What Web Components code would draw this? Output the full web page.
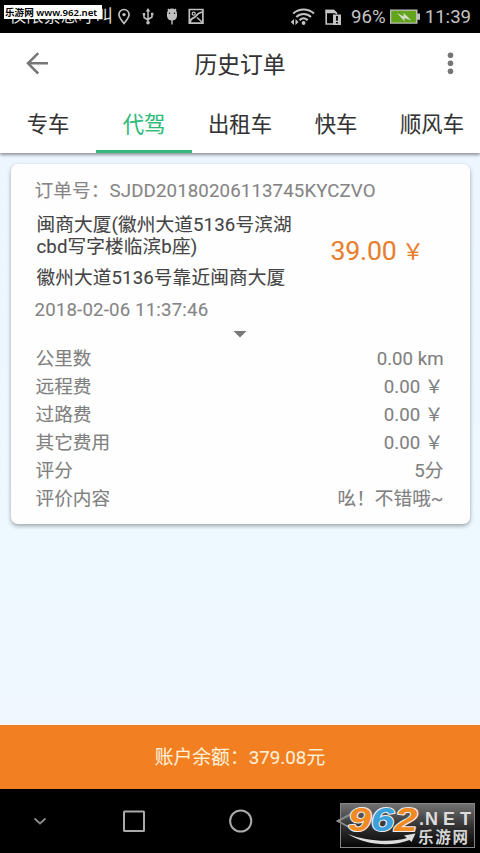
<!DOCTYPE html>
<html lang="zh-CN">
<head>
<meta charset="utf-8">
<title>历史订单</title>
<style>
html,body{margin:0;height:853px;overflow:hidden;background:#000;font-family:Roboto,"Noto Sans CJK SC",sans-serif;-webkit-text-stroke:.1px}
</style>
</head>
<body>
<order-app></order-app>
<script>
const define = (name, html) => customElements.define(name, class extends HTMLElement {
  constructor() {
    super();
    this.attachShadow({ mode: 'open' }).innerHTML = html;
  }
});

define('status-bar', `
<style>
:host{display:block;position:relative;height:33px;background:#000;color:#c4c4c4;-webkit-text-stroke:0}
.row{display:flex;height:33px;align-items:center;box-sizing:border-box;padding-left:9px}
.carrier{font-size:17.3px;line-height:33px;width:103px;color:#ddd;white-space:nowrap}
svg{display:block;flex:none}
.time{font-size:18.67px;line-height:33px;white-space:nowrap;padding-top:2px}
.tag{position:absolute;left:4px;top:5px;width:98px;height:14px;background:#fff;color:#000;font:600 9.6px/15px "Noto Sans","Noto Sans CJK SC",sans-serif;white-space:nowrap;box-sizing:border-box;padding-left:1px}
</style>
<div class="row">
 <span class="carrier">仅限紧急呼叫</span>
 <svg width="96" height="33" viewBox="112 0 96 33" fill="none" stroke="#c0c0c0" stroke-width="1.7">
  <path d="M124 23.500C121 20 118.900 17.500 118.900 14.600a5.100 5.100 0 0 1 10.200 0C129.100 17.500 127 20 124 23.500Z"/><circle cx="124" cy="14.600" r="1.700" fill="#c0c0c0" stroke="none"/>
  <path d="M148 11v11M144 14.500v3l4 2.500M152 14v3l-4 2.500" stroke-width="1.500"/><path d="M148 8l2.300 3.500h-4.600z" fill="#c0c0c0" stroke="none"/><circle cx="148" cy="22.800" r="1.800" fill="#c0c0c0" stroke="none"/><path d="M142.800 13h2.400v2.400h-2.400zM151 12.800h2.400v2.400h-2.400z" fill="#c0c0c0" stroke="none"/>
  <path d="M167 13.500a5 5 0 0 1 10 0v2.500a5 4.500 0 0 1-10 0z" fill="#c0c0c0" stroke="none"/><path d="M168 9l1.500 2M176 9l-1.500 2M172 20v4.500" stroke-width="1.400"/><path d="M169.500 12.500v1.600M174.500 12.500v1.600" stroke="#222" stroke-width="1.200"/>
  <path d="M189.300 9.500h13.600v13.600h-13.600zM190 22.500c1-6 4-3.500 6-6.500s3-3.500 6.500-4" stroke-width="1.700"/><path d="M197 17.500l5.500 5" stroke-width="1.500"/><circle cx="193.700" cy="13.700" r="1.500" stroke-width="1.300"/>
 </svg>
 <svg style="margin-left:82px" width="61" height="33" viewBox="290 0 61 33" fill="none" stroke="#c4c4c4" stroke-width="2">
  <path d="M293.200 13.500c6-5.300 14.800-5.300 20.800 0M296.300 16.900c4.300-4 10.400-4 14.700 0M299.500 20.300c2.500-2.500 5.700-2.500 8.200 0"/><circle cx="303.600" cy="23" r="1.900" fill="#c4c4c4" stroke="none"/>
  <path d="M294 19v6l-3.300-3zM295.500 19v6l3-3z" fill="#c4c4c4" stroke="none"/>
  <path d="M333 24h-6.800V10.500h7.300l3.500 3.300" stroke-width="1.600"/><path d="M325.500 9.700h8.500l3.300 3.500h-11.800z" fill="#c4c4c4" stroke="none"/><path d="M333 14.500h8V25h-8z" fill="#c4c4c4" stroke="none"/><path d="M337 16v4.800M337 22v1.600" stroke="#111"/>
 </svg>
 <span class="time">96%</span>
 <svg style="margin-left:3px" width="31" height="33" viewBox="388 0 31 33"><path d="M389 9.500h27.500v4H419v6.200h-2.500v4H389z" fill="#bdbdb8"/><path d="M390.300 10.800H415v11.700h-24.700z" fill="#62a51d"/><path d="M396 13l6.500 3.500.3-3.500 7.500 7.500-6.800-2.500v3.200z" fill="#d7ddcd"/></svg>
 <span class="time" style="margin-left:5px">11:39</span>
</div>
<div class="tag">乐游网 www.962.net</div>`);

define('title-bar', `
<style>
:host{display:grid;position:relative;z-index:1;grid-template-columns:96px 1fr 96px;height:62px;background:#fff;color:#333;font-size:22.8px;line-height:65px;text-align:center}
svg{display:block}
</style>
<svg width="96" height="62" viewBox="0 0 96 62" fill="none" stroke="#777" stroke-width="2.500"><path d="M48 30.300H28M38.200 20.200L28 30.300l10.200 10.200"/></svg>
<span><slot></slot></span>
<svg width="96" height="62" viewBox="384 0 96 62" fill="#757575"><circle cx="450.500" cy="22.200" r="2.800"/><circle cx="450.500" cy="30.200" r="2.800"/><circle cx="450.500" cy="38.200" r="2.800"/></svg>`);

define('tab-item', `
<style>
:host{display:block;box-sizing:border-box;height:58px;border-bottom:3px solid transparent;text-align:center;font-size:21.33px;line-height:60px;color:#333;white-space:nowrap}
:host([active]){color:#2dba79;border-color:#35b97c}
</style><slot></slot>`);

define('tab-strip', `
<style>
:host{display:grid;grid-template-columns:repeat(5,96px);height:58px;background:#fff;position:relative;box-shadow:0 2px 3px rgba(0,0,0,.4)}
</style><slot></slot>`);

define('fee-row', `
<style>
:host{display:flex;justify-content:space-between;height:28px;line-height:28px;font-size:18.67px;color:#808080;padding:0 26px 0 25px}
</style><slot name="label"></slot><slot></slot>`);

define('order-card', `
<style>
:host{display:block;box-sizing:border-box;height:360px;margin:11px 10.5px 0;background:#fefefe;border-radius:7px;box-shadow:0 2px 4px rgba(0,0,0,.34);font-size:18.67px;color:#444}
.no{height:28px;line-height:28px;padding:13px 0 0 24px;color:#858585;white-space:nowrap;letter-spacing:.12px}
.main{display:grid;box-sizing:border-box;grid-template-columns:320px 1fr;height:93px;padding-top:9px}
.addr{padding-left:26px;line-height:22px;letter-spacing:.1px}
.addr div{white-space:nowrap}
.to{margin-top:9px}
.price{color:#e87f2e;font-size:26.67px;line-height:30px;padding-top:22px;white-space:nowrap;letter-spacing:-.2px}
.price small{font-size:22px;margin-left:-1px;position:relative;top:-1px}
.date{height:24px;line-height:24px;padding-left:24px;color:#858585;letter-spacing:.16px}
.caret{display:block;margin:9px auto 7px}
</style>
<div class="no"><slot name="number"></slot></div>
<div class="main"><div class="addr"><div><slot name="from1"></slot></div><div><slot name="from2"></slot></div><div class="to"><slot name="to"></slot></div></div>
<div class="price"><slot name="price"></slot> <small>￥</small></div></div>
<div class="date"><slot name="date"></slot></div>
<svg class="caret" width="14" height="7" viewBox="0 0 14 7"><path d="M.5 0h13L7 6.500z" fill="#777"/></svg>
<slot></slot>`);

define('balance-bar', `
<style>
:host{display:block;height:64px;line-height:67px;text-align:center;background:#f27f22;color:#fff0d8;font-size:18.8px}
</style><slot></slot>`);

define('nav-bar', `
<style>
:host{display:block;height:64px;background:#000}
svg{display:block}
</style>
<svg width="480" height="64" viewBox="0 789 480 64" fill="none" stroke="#aaa" stroke-width="2"><path d="M34.500 818.500l5.500 5 5.500-5" stroke="#888"/><rect x="124" y="811.500" width="20" height="19.500" rx=".5"/><circle cx="240.700" cy="821" r="10.600"/><path d="M357 811.500v19l-19-9.500z"/></svg>`);

define('site-mark', `
<style>
:host{display:block;position:absolute;left:340px;top:803px;width:135px;height:45px}
svg{display:block;overflow:visible}
text{font-family:"Liberation Sans","Noto Sans CJK SC",sans-serif;font-weight:700}
</style>
<svg width="135" height="45" viewBox="0 0 135 45">
<defs><linearGradient id="g" x2="0" y2="1"><stop offset="0" stop-color="#737373"/><stop offset=".5" stop-color="#343434"/><stop offset="1" stop-color="#050505"/></linearGradient></defs>
<rect x=".5" y=".5" width="134" height="44" fill="url(#g)" stroke="#858585"/>
<path d="M-2 18L13 10M-2 18l16 9" stroke="#888" stroke-width="2" fill="none"/>
<g font-size="33" font-style="italic" stroke="#eee" stroke-width="2" paint-order="stroke" stroke-linejoin="round"><text x="8" y="27.500" fill="#f28a23" textLength="23" lengthAdjust="spacingAndGlyphs">9</text><text x="31" y="27.500" fill="#3ba1dc" textLength="23" lengthAdjust="spacingAndGlyphs">6</text><text x="54.500" y="27.500" fill="#f28a23" textLength="23" lengthAdjust="spacingAndGlyphs">2</text></g>
<text x="79" y="22" font-size="18" fill="#ddd" textLength="5">.</text>
<text x="85" y="22" font-size="18" fill="#ddd" textLength="46">NET</text>
<text x="78" y="39.500" font-size="15.500" fill="#d5d5d5" textLength="50">乐游网</text>
<path d="M8 31c17 7 43 9 59 4l-3-2.500 11.500-2-4 8.500-2-2C51 44.500 23 41.500 8 31z" fill="#ddd"/>
</svg>`);

define('order-app', `
<style>
:host{display:flex;flex-direction:column;position:relative;width:480px;height:853px;overflow:hidden}
main{flex:1;background:linear-gradient(#edf6ff,#edf8ff 65%,#f0f7ff);display:flow-root}
</style>
<status-bar></status-bar>
<title-bar>历史订单</title-bar>
<tab-strip><tab-item>专车</tab-item><tab-item active>代驾</tab-item><tab-item>出租车</tab-item><tab-item>快车</tab-item><tab-item>顺风车</tab-item></tab-strip>
<main>
<order-card>
<span slot="number">订单号：SJDD20180206113745KYCZVO</span>
<span slot="from1">闽商大厦(徽州大道5136号滨湖</span><span slot="from2">cbd写字楼临滨b座)</span>
<span slot="to">徽州大道5136号靠近闽商大厦</span>
<span slot="price">39.00</span><span slot="date">2018-02-06 11:37:46</span>
<fee-row><span slot="label">公里数</span>0.00 km</fee-row>
<fee-row><span slot="label">远程费</span>0.00 ￥</fee-row>
<fee-row><span slot="label">过路费</span>0.00 ￥</fee-row>
<fee-row><span slot="label">其它费用</span>0.00 ￥</fee-row>
<fee-row><span slot="label">评分</span>5分</fee-row>
<fee-row><span slot="label">评价内容</span>吆！不错哦~</fee-row>
</order-card>
</main>
<balance-bar>账户余额：379.08元</balance-bar>
<nav-bar></nav-bar>
<site-mark></site-mark>`);
</script>
</body>
</html>
